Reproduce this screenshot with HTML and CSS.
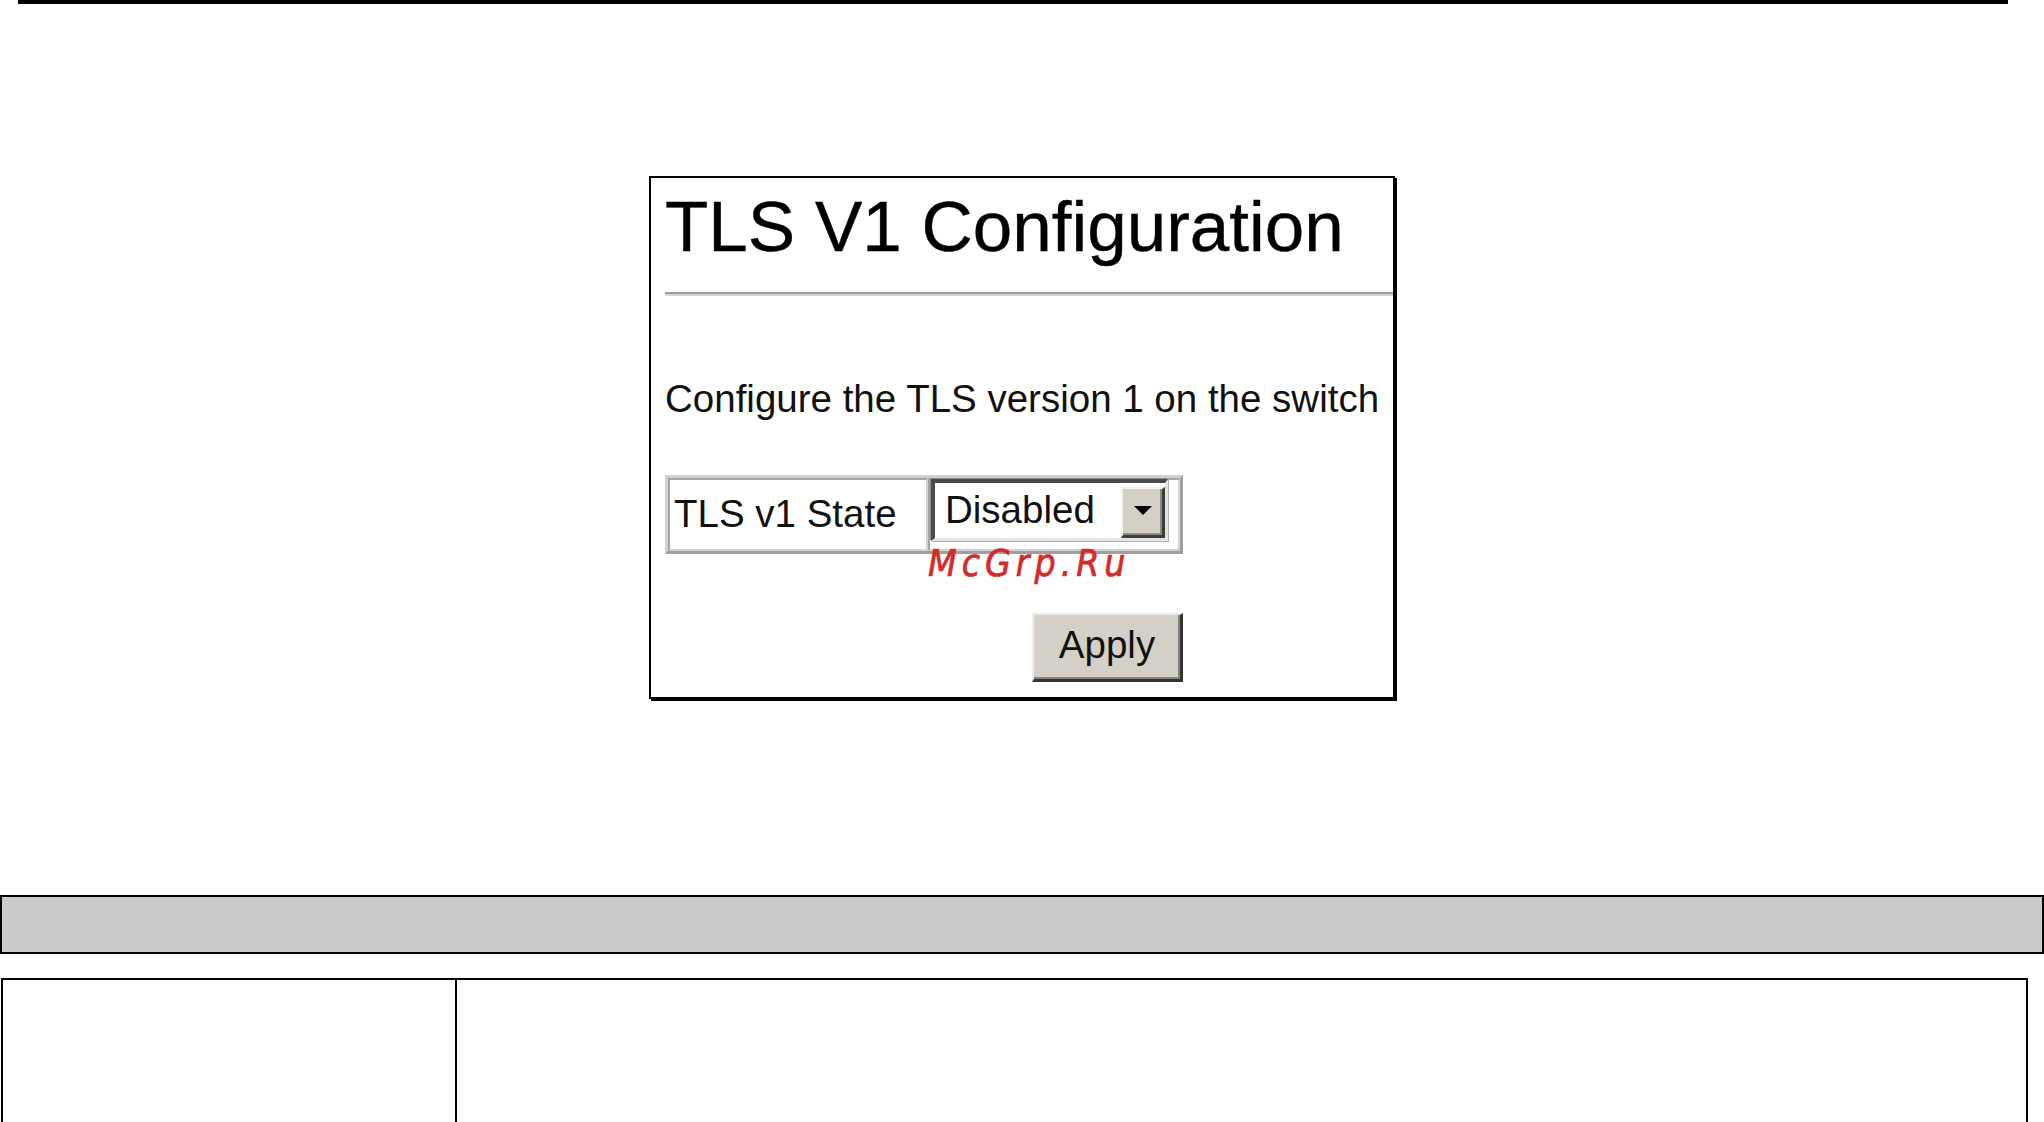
FILE: index.html
```html
<!DOCTYPE html>
<html>
<head>
<meta charset="utf-8">
<link rel="stylesheet" href="styles.css">
</head>
<body>
<div class="top-rule"></div>
<div class="panel">
  <h1 class="title">TLS V1 Configuration</h1>
  <div class="hr"></div>
  <p class="desc">Configure the TLS version 1 on the switch</p>
  <div class="form-area">
    <div class="form-table">
      <div class="cell label-cell">TLS v1 State</div>
      <div class="cell value-cell">
        <div class="select">
          <span class="select-text">Disabled</span>
          <span class="select-btn"><span class="arrow"></span></span>
        </div>
      </div>
    </div>
    <div class="actions"><button class="btn">Apply</button></div>
  </div>
  <div class="watermark">McGrp.Ru</div>
</div>
<div class="gray-bar"></div>
<div class="info-table">
  <div class="info-left"></div>
  <div class="info-right"></div>
</div>
</body>
</html>
```
FILE: styles.css
```css
html, body {
  margin: 0;
  padding: 0;
  background: #fff;
}
body {
  font-family: "Liberation Sans", Arial, sans-serif;
  width: 2044px;
  height: 1122px;
  overflow: hidden;
  color: #000;
}
.top-rule {
  margin-left: 18px;
  width: 1990px;
  height: 4px;
  background: #000;
}
.panel {
  position: relative;
  box-sizing: border-box;
  margin: 172px 0 0 649px;
  width: 746px;
  height: 523px;
  border: 2px solid #000;
  box-shadow: 2px 2px 0 #000;
  padding: 13px 0 0 14px;
}
.title {
  margin: 0;
  font-weight: normal;
  font-size: 71px;
  line-height: 71px;
  color: #000;
  white-space: nowrap;
  -webkit-text-stroke: 0.4px #000;
}
.hr {
  box-sizing: border-box;
  margin-top: 30px;
  height: 4px;
  border-top: 2px solid #9c9c9c;
  border-bottom: 2px solid #d4d4d4;
}
.desc {
  margin: 84px 0 0 0;
  font-size: 38.5px;
  line-height: 38.5px;
  color: #111;
  white-space: nowrap;
}
.form-area {
  margin-top: 56px;
  width: 518px;
}
.form-table {
  box-sizing: border-box;
  display: flex;
  height: 79px;
  border: 3px solid;
  border-color: #d0d0d0 #a0a0a0 #a0a0a0 #d0d0d0;
}
.cell {
  box-sizing: border-box;
  border: 2px solid;
  border-color: #a4a4a4 #d2d2d2 #d2d2d2 #a4a4a4;
  display: flex;
}
.label-cell {
  width: 260px;
  padding-left: 4px;
  align-items: center;
  font-size: 38.5px;
  line-height: 38.5px;
  color: #111;
  white-space: nowrap;
}
.value-cell {
  flex: 1;
  padding-left: 1px;
  align-items: flex-start;
}
.select {
  box-sizing: border-box;
  display: flex;
  width: 237px;
  height: 62px;
  margin-top: -1px;
  background: #fff;
  border-style: solid;
  border-width: 4px 3px 3px 4px;
  border-color: #4a4a4a #e4e4e4 #e4e4e4 #4a4a4a;
  box-shadow: -1px -1px 0 #8a8a8a, 1px 1px 0 #b0b0b0;
}
.select-text {
  flex: 1;
  align-self: center;
  padding-left: 10px;
  font-size: 38.5px;
  line-height: 38.5px;
  color: #111;
}
.select-btn {
  box-sizing: border-box;
  width: 44px;
  margin-top: 4px;
  background: #d4d0c8;
  border-style: solid;
  border-width: 2px 3px 3px 2px;
  border-color: #f4f2ee #3c3c3c #3c3c3c #f4f2ee;
  box-shadow: inset -2px -2px 0 #8c8a85;
  display: flex;
  align-items: center;
  justify-content: center;
}
.arrow {
  width: 0;
  height: 0;
  border-left: 9px solid transparent;
  border-right: 9px solid transparent;
  border-top: 9px solid #000;
  margin-top: -2px;
}
.actions {
  margin-top: 59px;
  display: flex;
  justify-content: flex-end;
}
.btn {
  box-sizing: border-box;
  width: 151px;
  height: 69px;
  padding: 0 0 2px 0;
  font-family: "Liberation Sans", Arial, sans-serif;
  font-size: 38.5px;
  line-height: 38.5px;
  color: #111;
  background: #d4d0c8;
  border-style: solid;
  border-width: 2px 3px 3px 2px;
  border-color: #eceae5 #333 #333 #eceae5;
  box-shadow: inset -2px -2px 0 #858380;
}
.watermark {
  position: absolute;
  left: 277px;
  top: 367px;
  font-family: "DejaVu Sans Condensed", "DejaVu Sans", sans-serif;
  font-stretch: condensed;
  font-style: italic;
  font-weight: normal;
  font-size: 37px;
  line-height: 37px;
  letter-spacing: 5px;
  color: #d42a2a;
  -webkit-text-stroke: 0.7px #d42a2a;
  white-space: nowrap;
}
.gray-bar {
  box-sizing: border-box;
  margin-top: 196px;
  width: 2044px;
  height: 59px;
  border: 2px solid #000;
  background: #cbcbcb;
}
.info-table {
  box-sizing: border-box;
  display: flex;
  margin: 24px 0 0 1px;
  width: 2027px;
  height: 146px;
  border: 2px solid #000;
}
.info-left {
  width: 452px;
  border-right: 2px solid #000;
}
.info-right {
  flex: 1;
}
```
